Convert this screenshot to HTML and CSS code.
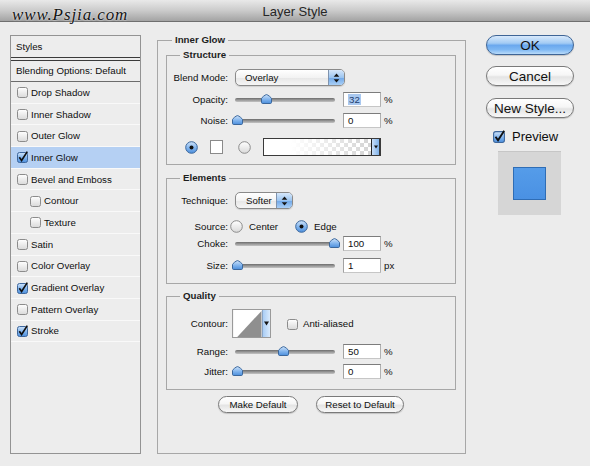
FILE: index.html
```html
<!DOCTYPE html>
<html>
<head>
<meta charset="utf-8">
<title>Layer Style</title>
<link rel="stylesheet" href="styles.css">
</head>
<body>
<svg class="sprite" width="0" height="0" aria-hidden="true">
  <defs>
    <linearGradient id="gWhite" x1="0" y1="0" x2="0" y2="1">
      <stop offset="0" stop-color="#ffffff"/><stop offset="1" stop-color="#d9d9d9"/>
    </linearGradient>
    <linearGradient id="gBlue" x1="0" y1="0" x2="0" y2="1">
      <stop offset="0" stop-color="#cfe3f9"/><stop offset=".5" stop-color="#86b7ee"/><stop offset="1" stop-color="#4b8edc"/>
    </linearGradient>
    <symbol id="cb" viewBox="0 0 11 12">
      <rect x=".5" y="1.5" width="10" height="10" rx="2" fill="url(#gWhite)" stroke="#8c8c8c"/>
    </symbol>
    <symbol id="cbOn" viewBox="0 0 11 12">
      <rect x=".5" y="1.5" width="10" height="10" rx="2" fill="url(#gBlue)" stroke="#3e679c"/>
      <path d="M2.3 6.2 L4.6 9.5 L10.3 0.6" fill="none" stroke="#101010" stroke-width="1.7"/>
    </symbol>
    <symbol id="thumb" viewBox="0 0 11 10">
      <path d="M.5 4.5 C.5 3.8 4.2 .6 5.5 .6 S10.5 3.8 10.5 4.5V8.3Q10.5 9.5 9.3 9.5H1.7Q.5 9.5 .5 8.3z" fill="url(#gBlue)" stroke="#3b679c"/>
    </symbol>
    <symbol id="radio" viewBox="0 0 13 13">
      <circle cx="6.5" cy="6.5" r="5.8" fill="url(#gWhite)" stroke="#8c8c8c"/>
    </symbol>
    <symbol id="radioOn" viewBox="0 0 13 13">
      <circle cx="6.5" cy="6.5" r="5.8" fill="url(#gBlue)" stroke="#3b679c"/>
      <circle cx="6.5" cy="6.5" r="2" fill="#111"/>
    </symbol>
    <symbol id="updown" viewBox="0 0 7 10">
      <path d="M3.5 .5 6.3 3.8H.7z M.7 6.2h5.6L3.5 9.5z" fill="#141414"/>
    </symbol>
    <symbol id="down" viewBox="0 0 5 5">
      <path d="M0 .5h5L2.5 4.5z" fill="#141414"/>
    </symbol>
  </defs>
</svg>

<div class="window">
  <div class="titlebar">
    <span class="watermark">www.Psjia.com</span>
    <span class="title">Layer Style</span>
  </div>

  <div class="content">
    <div class="styles">
      <div class="styles-head">Styles</div>
      <div class="styles-blend">Blending Options: Default</div>
      <div class="item"><svg class="cbox"><use href="#cb"/></svg>Drop Shadow</div>
      <div class="item"><svg class="cbox"><use href="#cb"/></svg>Inner Shadow</div>
      <div class="item"><svg class="cbox"><use href="#cb"/></svg>Outer Glow</div>
      <div class="item selected"><svg class="cbox"><use href="#cbOn"/></svg>Inner Glow</div>
      <div class="item"><svg class="cbox"><use href="#cb"/></svg>Bevel and Emboss</div>
      <div class="item nested"><svg class="cbox"><use href="#cb"/></svg>Contour</div>
      <div class="item nested"><svg class="cbox"><use href="#cb"/></svg>Texture</div>
      <div class="item"><svg class="cbox"><use href="#cb"/></svg>Satin</div>
      <div class="item"><svg class="cbox"><use href="#cb"/></svg>Color Overlay</div>
      <div class="item"><svg class="cbox"><use href="#cbOn"/></svg>Gradient Overlay</div>
      <div class="item"><svg class="cbox"><use href="#cb"/></svg>Pattern Overlay</div>
      <div class="item"><svg class="cbox"><use href="#cbOn"/></svg>Stroke</div>
    </div>

    <fieldset class="group main-group">
      <legend>Inner Glow</legend>

      <fieldset class="group sub-group structure">
        <legend>Structure</legend>
        <div class="row r-blend">
          <span class="lbl">Blend Mode:</span>
          <div class="select blend-select"><span class="val">Overlay</span><span class="arrows"><svg class="updown"><use href="#updown"/></svg></span></div>
        </div>
        <div class="row r-gap6">
          <span class="lbl">Opacity:</span>
          <div class="slider"><svg class="thumb" style="left:26px"><use href="#thumb"/></svg></div>
          <div class="num"><span class="sel">32</span></div><span class="unit">%</span>
        </div>
        <div class="row r-gap6">
          <span class="lbl">Noise:</span>
          <div class="slider"><svg class="thumb" style="left:-3px"><use href="#thumb"/></svg></div>
          <div class="num">0</div><span class="unit">%</span>
        </div>
        <div class="row r-color">
          <svg class="radio"><use href="#radioOn"/></svg>
          <span class="swatch"></span>
          <svg class="radio radio2"><use href="#radio"/></svg>
          <div class="grad"><span class="grad-fill"></span><span class="grad-drop"><svg class="down"><use href="#down"/></svg></span></div>
        </div>
      </fieldset>

      <fieldset class="group sub-group elements">
        <legend>Elements</legend>
        <div class="row r-tech">
          <span class="lbl">Technique:</span>
          <div class="select tech-select"><span class="val">Softer</span><span class="arrows"><svg class="updown"><use href="#updown"/></svg></span></div>
        </div>
        <div class="row r-source">
          <span class="lbl lbl-tight">Source:</span>
          <svg class="radio"><use href="#radio"/></svg><span class="opt">Center</span>
          <svg class="radio radio-edge"><use href="#radioOn"/></svg><span class="opt">Edge</span>
        </div>
        <div class="row r-choke">
          <span class="lbl">Choke:</span>
          <div class="slider"><svg class="thumb" style="left:94px"><use href="#thumb"/></svg></div>
          <div class="num">100</div><span class="unit">%</span>
        </div>
        <div class="row r-gap7">
          <span class="lbl">Size:</span>
          <div class="slider"><svg class="thumb" style="left:-3px"><use href="#thumb"/></svg></div>
          <div class="num">1</div><span class="unit">px</span>
        </div>
      </fieldset>

      <fieldset class="group sub-group quality">
        <legend>Quality</legend>
        <div class="row r-contour">
          <span class="lbl lbl-contour">Contour:</span>
          <div class="contour">
            <svg class="contour-curve" viewBox="0 0 30 29"><rect width="30" height="29" fill="#fff"/><polygon points="4,29 30,1 30,29" fill="#8f8f8f"/></svg>
            <span class="contour-drop"><svg class="down-big"><use href="#down"/></svg></span>
          </div>
          <svg class="cbox aa-box"><use href="#cb"/></svg><span class="opt">Anti-aliased</span>
        </div>
        <div class="row r-gap6">
          <span class="lbl">Range:</span>
          <div class="slider"><svg class="thumb" style="left:43px"><use href="#thumb"/></svg></div>
          <div class="num">50</div><span class="unit">%</span>
        </div>
        <div class="row r-gap5">
          <span class="lbl">Jitter:</span>
          <div class="slider"><svg class="thumb" style="left:-3px"><use href="#thumb"/></svg></div>
          <div class="num">0</div><span class="unit">%</span>
        </div>
      </fieldset>

      <div class="defaults">
        <button class="pill small make">Make Default</button>
        <button class="pill small reset">Reset to Default</button>
      </div>
    </fieldset>

    <div class="side">
      <button class="pill big ok">OK</button>
      <button class="pill big cancel">Cancel</button>
      <button class="pill big newstyle">New Style...</button>
      <div class="preview-row"><svg class="pbox"><use href="#cbOn"/></svg><span>Preview</span></div>
      <div class="preview"><span class="preview-swatch"></span></div>
    </div>
  </div>
</div>
</body>
</html>
```

FILE: styles.css
```css
* { box-sizing: border-box; }
html, body { margin: 0; padding: 0; }
body {
  background: #ececec;
  font-family: "Liberation Sans", Arial, sans-serif;
  font-size: 9.7px;
  color: #0e0e0e;
}
.sprite { display: block; width: 0; height: 0; overflow: hidden; }

.window {
  width: 590px;
  height: 466px;
  overflow: hidden;
  background: #ececec;
}

/* title bar */
.titlebar {
  position: relative;
  height: 22px;
  background: linear-gradient(#e9e9e9, #cbcbcb 50%, #a3a3a3);
  border-bottom: 1px solid #6f6f6f;
  display: flex;
  justify-content: center;
  align-items: center;
}
.title { font-size: 13px; color: #262626; padding-top: 1px; }
.watermark {
  position: absolute;
  left: 12px;
  top: 5px;
  font-family: "Liberation Serif", "Times New Roman", serif;
  font-style: italic;
  font-size: 17px;
  line-height: 20px;
  letter-spacing: 0.9px;
  color: #141414;
  text-shadow: 0 0 2px #fff;
}

.content {
  display: flex;
  align-items: flex-start;
  padding: 13px 0 0 10px;
}

/* left styles list */
.styles {
  flex: none;
  width: 131px;
  height: 419px;
  border: 1px solid #939393;
  background: #ededed;
}
.styles-head {
  height: 25px;
  padding-left: 5px;
  line-height: 21px;
  border-bottom: 4px double #3a3a3a;
}
.styles-blend {
  height: 21px;
  padding-left: 5px;
  line-height: 20px;
  border-bottom: 1px solid #6c6c6c;
}
.item {
  display: flex;
  align-items: center;
  height: 21.7px;
  padding-left: 6px;
  border-bottom: 1px solid #f9f9f9;
}
.item.nested { padding-left: 19px; }
.item.selected { background: #b5d0f3; }
.cbox { width: 11px; height: 12px; flex: none; margin-right: 3px; }

/* fieldsets */
.group {
  margin: 0;
  border: 1px solid #a7a7a7;
  min-width: 0;
}
.group > legend {
  font-weight: bold;
  line-height: 14px;
  padding: 0 3px;
  color: #1e1e1e;
}
.main-group {
  flex: none;
  width: 309px;
  height: 421px;
  margin: -2px 0 0 16px;
  padding: 0 9px 0 8px;
}
.main-group > legend { margin-left: 6px; }
.sub-group {
  width: 290px;
  padding: 0 0 10px 0;
}
.sub-group > legend { margin-left: 13px; }
.structure { margin-top: 1px; padding-bottom: 8px; }
.elements { margin-top: 6px; }
.quality { margin-top: 5px; }

.row { display: flex; align-items: center; height: 15px; }
.lbl { flex: none; width: 61px; text-align: right; margin-right: 7px; }
.lbl-tight { margin-right: 2px; }
.lbl-contour { margin-right: 4px; }
.r-blend { height: 17px; margin-top: 7px; }
.r-gap5 { margin-top: 5px; }
.r-gap6 { margin-top: 6px; }
.r-gap7 { margin-top: 7px; }
.r-color { height: 18px; margin-top: 10px; padding-left: 18px; }
.r-tech { height: 17px; margin-top: 7px; }
.r-source { margin-top: 10px; }
.r-choke { margin-top: 2px; }
.r-contour { height: 29px; margin-top: 6px; }

/* popup selects */
.select {
  flex: none;
  display: flex;
  height: 17px;
  border: 1px solid #8a8a8a;
  border-radius: 5px;
  overflow: hidden;
  background: linear-gradient(#ffffff, #f3f3f3 50%, #e6e6e6 51%, #f5f5f5);
  box-shadow: 0 1px 1px rgba(0, 0, 0, 0.12);
}
.blend-select { width: 110px; }
.tech-select { width: 58px; }
.select .val { flex: 1; line-height: 15px; padding-left: 9px; }
.tech-select .val { padding-left: 10px; }
.select .arrows {
  flex: none;
  width: 16px;
  display: flex;
  align-items: center;
  justify-content: center;
  border-left: 1px solid #7f93ae;
  background: linear-gradient(#d6e7fa, #9cc5f0 50%, #6fa7e8 51%, #a9cff6);
}
.updown { width: 7px; height: 10px; }

/* sliders */
.slider {
  flex: none;
  position: relative;
  width: 100px;
  height: 4px;
  border-radius: 2px;
  background: linear-gradient(#6c6c6c, #999 50%, #c4c4c4);
}
.thumb { position: absolute; top: -4px; width: 11px; height: 10px; }

/* number fields */
.num {
  flex: none;
  width: 38px;
  height: 15px;
  margin-left: 8px;
  padding-left: 4px;
  line-height: 13px;
  background: #fff;
  border: 1px solid;
  border-color: #7c7c7c #b0b0b0 #c6c6c6 #a2a2a2;
}
.num .sel { background: #a9c8ef; color: #1c3d6e; padding: 0 1px; }
.unit { margin-left: 3px; }

/* color row */
.radio { flex: none; width: 13px; height: 13px; }
.swatch {
  flex: none;
  width: 13px;
  height: 14px;
  margin-left: 12px;
  background: #fff;
  border: 1px solid #8a8a8a;
}
.radio2 { margin-left: 15px; }
.grad {
  flex: none;
  display: flex;
  width: 118px;
  height: 18px;
  margin-left: 12px;
  border: 1px solid #3a3a3a;
  border-right-width: 2px;
}
.grad-fill {
  flex: 1;
  background:
    linear-gradient(to right, #fff 0%, #fff 25%, rgba(255, 255, 255, 0) 100%),
    conic-gradient(#d4d4d4 25%, #fff 0 50%, #d4d4d4 0 75%, #fff 0) 0 0 / 8px 8px;
}
.grad-drop {
  flex: none;
  width: 8px;
  display: flex;
  align-items: center;
  justify-content: center;
  background: linear-gradient(to right, #c9def7, #7fb2ea);
  border-left: 1px solid #222;
}
.down { width: 4px; height: 4px; }

/* elements */
.opt { margin-left: 6px; }
.radio-edge { margin-left: 17px; }

/* contour */
.contour {
  flex: none;
  display: flex;
  height: 29px;
  border: 1px solid #9a9a9a;
}
.contour-curve { width: 29px; height: 27px; display: block; }
.contour-drop {
  width: 8px;
  display: flex;
  align-items: center;
  justify-content: center;
  background: linear-gradient(to right, #a9cdf5, #d9eafc);
  border-left: 1px solid #8aa6c8;
}
.down-big { width: 5px; height: 7px; }
.aa-box { margin-left: 16px; margin-right: 0; }
.r-contour .opt { margin-left: 5px; }

/* buttons */
.pill {
  display: flex;
  align-items: center;
  justify-content: center;
  padding: 0;
  font-family: "Liberation Sans", Arial, sans-serif;
  color: #111;
  border: 1px solid #7a7a7a;
  background: linear-gradient(#ffffff, #f6f6f6 45%, #e4e4e4 55%, #f8f8f8);
  box-shadow: 0 1px 1px rgba(0, 0, 0, 0.18);
}
.small { height: 17px; border-radius: 9px; font-size: 9.7px; }
.make { width: 80px; }
.reset { width: 88px; }
.defaults {
  display: flex;
  justify-content: center;
  gap: 18px;
  margin-top: 6px;
}

.side {
  flex: none;
  width: 88px;
  margin-left: 20px;
  display: flex;
  flex-direction: column;
}
.big { width: 88px; height: 20px; border-radius: 10px; font-size: 13.5px; }
.ok {
  border-color: #3f6596;
  background: linear-gradient(#d8e9fb, #a2cbf4 40%, #6aa8ee 52%, #7db7f3 75%, #b9dbfa);
}
.cancel { margin-top: 11px; }
.newstyle { margin-top: 12px; }
.preview-row {
  display: flex;
  align-items: center;
  height: 15px;
  margin-top: 11px;
  padding-left: 7px;
  font-size: 13px;
}
.pbox { width: 12px; height: 13px; margin-right: 7px; }
.preview {
  width: 63px;
  height: 64px;
  margin: 7px 0 0 12px;
  display: flex;
  align-items: center;
  justify-content: center;
  background: #d6d6d6;
  border-top: 1px solid #c6c6c6;
}
.preview-swatch {
  width: 33px;
  height: 33px;
  background: linear-gradient(#559ce9, #4a91e3);
  border: 1px solid #2f6db5;
}
```
